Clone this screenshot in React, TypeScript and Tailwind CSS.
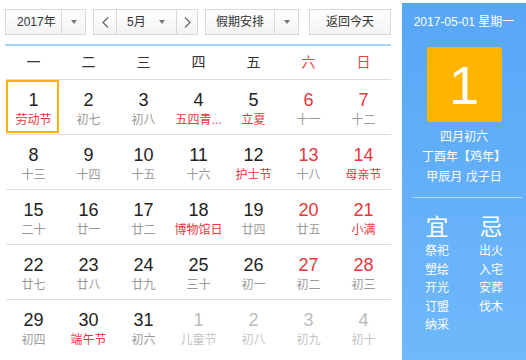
import React from "react";

type Day = { n: number; l: string; red?: boolean; hol?: boolean; other?: boolean; today?: boolean };

const weeks: Day[][] = [
  [
    { n: 1, l: "劳动节", hol: true, today: true },
    { n: 2, l: "初七" },
    { n: 3, l: "初八" },
    { n: 4, l: "五四青...", hol: true },
    { n: 5, l: "立夏", hol: true },
    { n: 6, l: "十一", red: true },
    { n: 7, l: "十二", red: true },
  ],
  [
    { n: 8, l: "十三" },
    { n: 9, l: "十四" },
    { n: 10, l: "十五" },
    { n: 11, l: "十六" },
    { n: 12, l: "护士节", hol: true },
    { n: 13, l: "十八", red: true },
    { n: 14, l: "母亲节", red: true, hol: true },
  ],
  [
    { n: 15, l: "二十" },
    { n: 16, l: "廿一" },
    { n: 17, l: "廿二" },
    { n: 18, l: "博物馆日", hol: true },
    { n: 19, l: "廿四" },
    { n: 20, l: "廿五", red: true },
    { n: 21, l: "小满", red: true, hol: true },
  ],
  [
    { n: 22, l: "廿七" },
    { n: 23, l: "廿八" },
    { n: 24, l: "廿九" },
    { n: 25, l: "三十" },
    { n: 26, l: "初一" },
    { n: 27, l: "初二", red: true },
    { n: 28, l: "初三", red: true },
  ],
  [
    { n: 29, l: "初四" },
    { n: 30, l: "端午节", hol: true },
    { n: 31, l: "初六" },
    { n: 1, l: "儿童节", other: true },
    { n: 2, l: "初八", other: true },
    { n: 3, l: "初九", other: true },
    { n: 4, l: "初十", other: true },
  ],
];

const weekdays = ["一", "二", "三", "四", "五", "六", "日"];
const yi = ["祭祀", "塑绘", "开光", "订盟", "纳采"];
const ji = ["出火", "入宅", "安葬", "伐木"];

function Caret() {
  return <span className="w-0 h-0 border-l-[3px] border-r-[3px] border-t-[4px] border-l-transparent border-r-transparent border-t-[#777]" />;
}

function Arrow({ dir }: { dir: "l" | "r" }) {
  return (
    <svg width="7" height="11" viewBox="0 0 7 11" fill="none" stroke="#666" strokeWidth="1.2">
      {dir === "l" ? <path d="M6 0.5 L1 5.5 L6 10.5" /> : <path d="M1 0.5 L6 5.5 L1 10.5" />}
    </svg>
  );
}

const box = "h-[26px] border border-[#d9d9d9] bg-gradient-to-b from-white to-[#f3f3f3] flex text-[12px] text-[#333]";

export default function App() {
  return (
    <div
      className="w-[526px] h-[360px] bg-white flex overflow-hidden"
      style={{ fontFamily: '"Liberation Sans", "Noto Sans CJK SC", sans-serif' }}
    >
      {/* left: calendar */}
      <div className="w-[402px] pl-[5px] pt-[9px]">
        <div className="flex gap-[7px] w-[386px]">
          <div className={`${box} items-stretch w-[81px]`}>
            <div className="flex-1 flex items-center pl-[11px]">2017年</div>
            <div className="w-[24px] border-l border-[#d9d9d9] flex items-center justify-center"><Caret /></div>
          </div>
          <div className={`${box} items-stretch w-[105px]`}>
            <div className="w-[23px] border-r border-[#d9d9d9] flex items-center justify-center"><Arrow dir="l" /></div>
            <div className="flex-1 flex items-center justify-between pl-[10px] pr-[11px]">
              <span>5月</span>
              <Caret />
            </div>
            <div className="w-[21px] border-l border-[#d9d9d9] flex items-center justify-center"><Arrow dir="r" /></div>
          </div>
          <div className={`${box} items-stretch w-[94px]`}>
            <div className="flex-1 flex items-center pl-[10px]">假期安排</div>
            <div className="w-[24px] border-l border-[#d9d9d9] flex items-center justify-center"><Caret /></div>
          </div>
          <div className={`${box} w-[82px] ml-[3px] justify-center items-center`}>返回今天</div>
        </div>

        <div className="mt-[9px] w-[386px] h-[2px] bg-[#a6d2f6]" />

        <div className="w-[385px] ml-[1px]">
          <div className="grid grid-cols-7 h-[34px] border-b border-[#dcdcdc] items-center text-[14px]">
            {weekdays.map((w, i) => (
              <div key={w} className={`text-center ${i > 4 ? "text-[#e8464b]" : "text-[#333]"}`}>{w}</div>
            ))}
          </div>
          {weeks.map((row, ri) => (
            <div key={ri} className={`grid grid-cols-7 h-[55px] ${ri < 4 ? "border-b border-[#dcdcdc]" : ""}`}>
              {row.map((d, di) => {
                const numColor = d.other ? "text-[#bbb]" : d.red ? "text-[#e8363c]" : "text-[#222]";
                const lunColor = d.other ? "text-[#c4c4c4]" : d.hol ? "text-[#e8363c]" : "text-[#999]";
                return (
                  <div key={di} className="relative flex flex-col items-center pt-[9px]">
                    {d.today && <div className="absolute left-0 top-0 w-[53px] h-[53px] border-2 border-[#ffb10a]" />}
                    <div className={`text-[18px] leading-[22px] ${numColor}`}>{d.n}</div>
                    <div className={`mt-[1px] text-[12px] leading-[16px] whitespace-nowrap ${lunColor}`}>{d.l}</div>
                  </div>
                );
              })}
            </div>
          ))}
        </div>
      </div>

      {/* right: detail panel */}
      <div className="w-[124px] mt-[3px] bg-gradient-to-b from-[#57a7f6] to-[#6fb8fb] text-white flex flex-col items-center">
        <div className="pt-[12px] text-[12px] leading-[14px] whitespace-nowrap">2017-05-01 星期一</div>
        <div className="mt-[18px] w-[75px] h-[75px] rounded-[3px] bg-[#ffb400] flex items-center justify-center text-[54px] font-light leading-none">1</div>
        <div className="mt-[5px] text-[12px] leading-[20px] text-center">
          <div>四月初六</div>
          <div>丁酉年【鸡年】</div>
          <div>甲辰月 戊子日</div>
        </div>
        <div className="mt-[10px] w-[110px] h-px bg-white/50 ml-[6px]" />
        <div className="w-[108px] grid grid-cols-2 mt-[14px]">
          <div className="flex flex-col items-center">
            <div className="text-[23px] leading-[30px]">宜</div>
            <div className="text-[12px] leading-[18.5px]">
              {yi.map((t) => <div key={t}>{t}</div>)}
            </div>
          </div>
          <div className="flex flex-col items-center">
            <div className="text-[23px] leading-[30px]">忌</div>
            <div className="text-[12px] leading-[18.5px]">
              {ji.map((t) => <div key={t}>{t}</div>)}
            </div>
          </div>
        </div>
      </div>
    </div>
  );
}
